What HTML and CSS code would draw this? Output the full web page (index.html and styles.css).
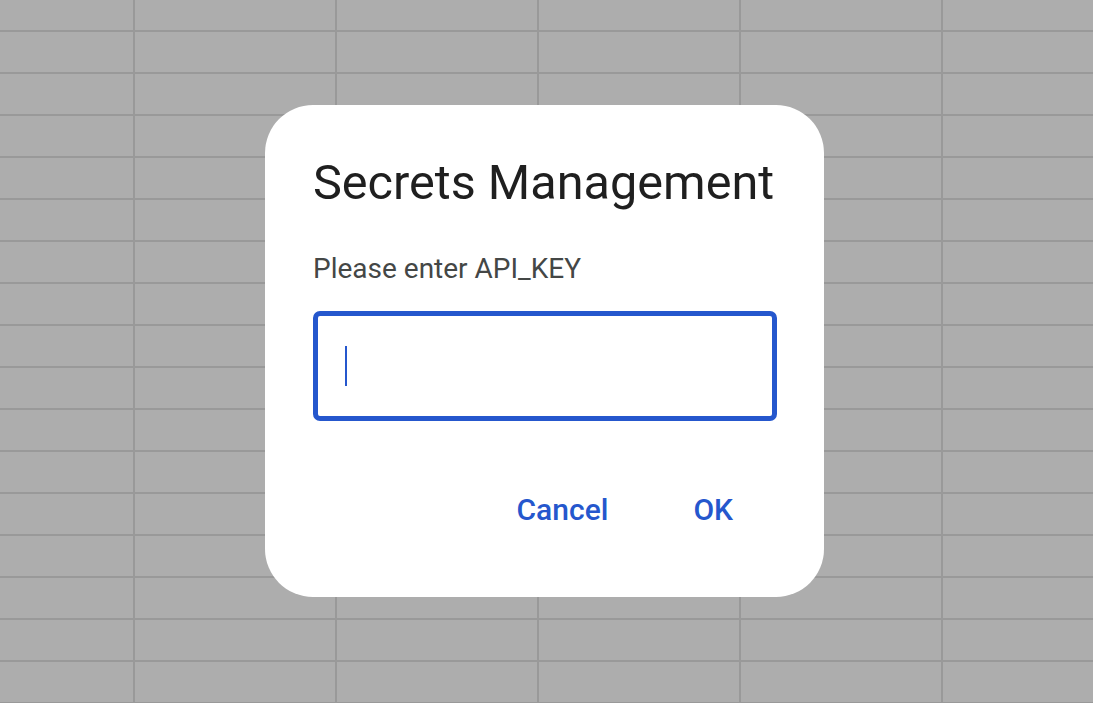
FILE: index.html
```html
<!DOCTYPE html>
<html>
<head>
<meta charset="utf-8">
<link rel="stylesheet" href="styles.css">
</head>
<body>
<div class="sheet">
  <div class="dialog">
    <h1 class="title">Secrets Management</h1>
    <p class="prompt">Please enter API_KEY</p>
    <div class="field"><span class="caret"></span></div>
    <div class="actions">
      <button class="btn">Cancel</button>
      <button class="btn">OK</button>
    </div>
  </div>
</div>
</body>
</html>
```
FILE: styles.css
```css
html, body {
  margin: 0;
  padding: 0;
}
body {
  font-family: Roboto, "Liberation Sans", sans-serif;
  background-color: #adadad;
  background-image:
    repeating-linear-gradient(to right, transparent 0 133px, #999999 133px 135px, transparent 135px 202px),
    repeating-linear-gradient(to bottom, transparent 0 30px, #999999 30px 32px, transparent 32px 42px);
}
.sheet {
  width: 1093px;
  height: 703px;
  display: flex;
  align-items: center;
  justify-content: center;
}
.dialog {
  box-sizing: border-box;
  width: 559px;
  margin-right: 4px;
  margin-top: -1px;
  background: #ffffff;
  border-radius: 48px;
  padding: 50px 48px 69px 48px;
}
.title {
  margin: 0;
  font-size: 48.6px;
  line-height: 56px;
  font-weight: 400;
  color: #1f1f1f;
}
.prompt {
  margin: 42px 0 0 0;
  font-size: 28px;
  line-height: 32px;
  color: #444746;
}
.field {
  box-sizing: border-box;
  margin-top: 26px;
  width: 464px;
  height: 110px;
  border: 5px solid #2557cd;
  border-radius: 7px;
  padding: 30px 0 0 27px;
}
.caret {
  display: block;
  width: 2px;
  height: 40px;
  background: #2557cd;
}
.actions {
  margin-top: 71px;
  display: flex;
  justify-content: flex-end;
}
.btn {
  border: 0;
  background: transparent;
  font-family: Roboto, "Liberation Sans", sans-serif;
  font-size: 30px;
  line-height: 36px;
  font-weight: 500;
  color: #2557cd;
  padding: 0 43px;
  margin: 0;
}
.btn:first-child {
  padding-right: 42px;
}
```
